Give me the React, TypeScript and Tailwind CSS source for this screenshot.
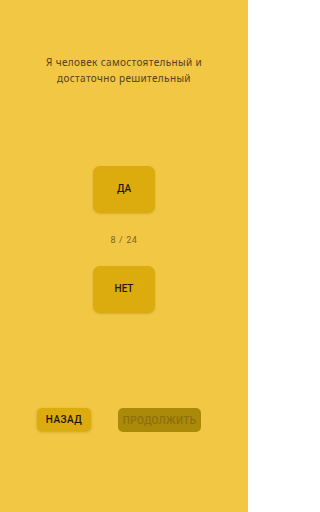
export default function App() {
  return (
    <div
      className="flex h-[512px] w-[248px] flex-col items-center bg-[#f2c744]"
      style={{ fontFamily: '"Noto Sans", "DejaVu Sans", sans-serif' }}
    >
      <p className="mt-[54px] px-6 text-center text-[10px] leading-[16px] tracking-[0.35px] text-[#54441a]">
        Я человек самостоятельный и
        <br />
        достаточно решительный
      </p>

      <button className="mt-[80px] flex h-[47px] w-[62px] items-center justify-center rounded-[7px] bg-[#dcab0e] pb-[3px] font-['Roboto'] text-[10px] font-medium text-[#1f1906] shadow-[0_1px_2px_rgba(120,90,0,0.25)]">
        ДА
      </button>

      <div className="mt-[21px] font-['Roboto'] text-[9px] leading-[13px] tracking-[0.6px] text-[#7a6624]">8 / 24</div>

      <button className="mt-[19px] flex h-[47px] w-[62px] items-center justify-center rounded-[7px] bg-[#dcab0e] pb-[3px] font-['Roboto'] text-[10px] font-medium text-[#1f1906] shadow-[0_1px_2px_rgba(120,90,0,0.25)]">
        НЕТ
      </button>

      <div className="mt-[95px] flex w-full gap-[27px] pl-[37px]">
        <button className="flex h-[23px] w-[54px] items-center justify-center rounded-[5px] bg-[#dcab0e] font-['Roboto'] text-[10px] font-medium tracking-[0.5px] text-[#1a1505] shadow-[0_1px_3px_rgba(120,90,0,0.35)]">
          НАЗАД
        </button>
        <button className="flex h-[24px] w-[83px] items-center justify-center rounded-[5px] bg-[#ab8909] font-['Roboto'] text-[10px] font-medium tracking-[0.3px] text-[#8c6f0c]">
          ПРОДОЛЖИТЬ
        </button>
      </div>
    </div>
  );
}
